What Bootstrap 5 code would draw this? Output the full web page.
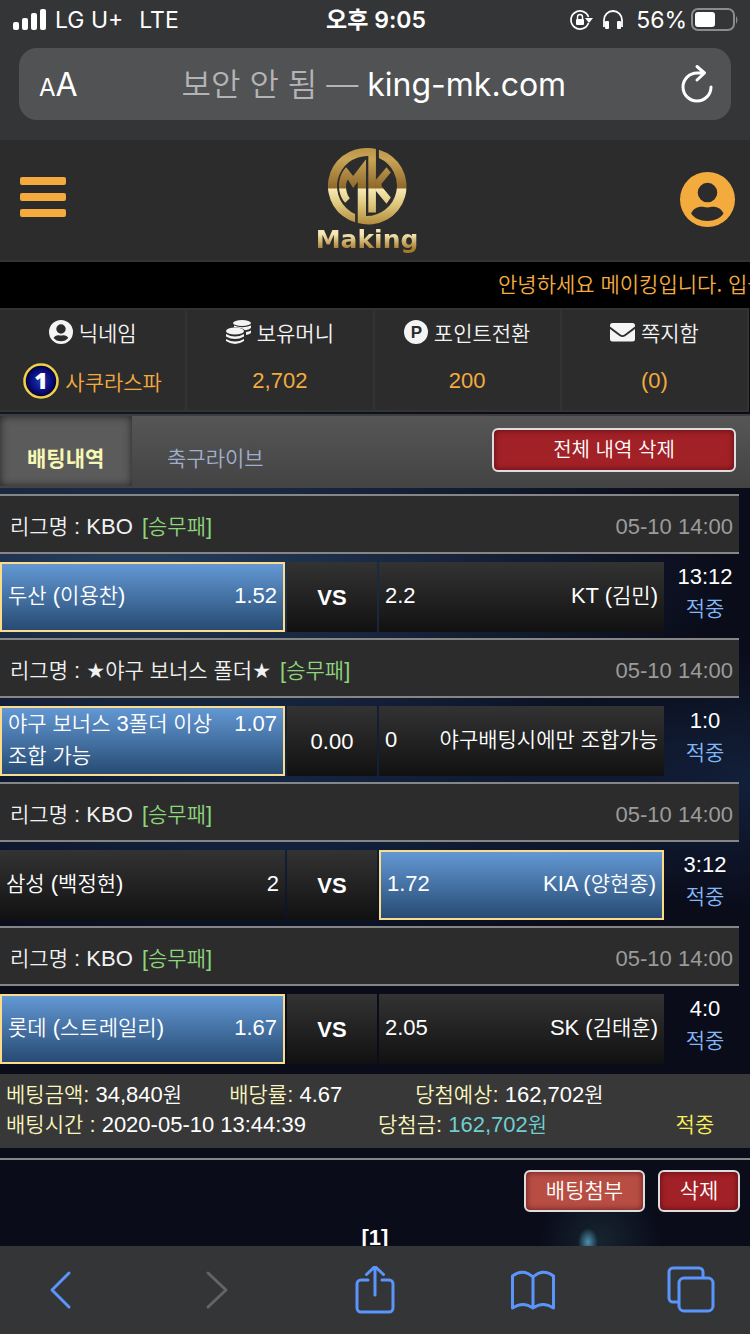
<!DOCTYPE html>
<html lang="ko">
<head>
<meta charset="utf-8">
<meta name="viewport" content="width=device-width, initial-scale=1">
<title>Making - 배팅내역</title>
<link href="https://cdn.jsdelivr.net/npm/bootstrap@5.3.0/dist/css/bootstrap.min.css" rel="stylesheet">
<style>
  body { font-family: "Liberation Sans", "Noto Sans CJK KR", sans-serif; font-size: 22px; line-height: 32px; color: #fff; background: #343537; }
  a { color: inherit; text-decoration: none; }
  button { color: inherit; }
  svg { display: block; flex: none; }
  .ko { font-family: "Noto Sans CJK KR", sans-serif; font-size: 21px; font-weight: 350; }
  span.ko { line-height: 20px; }
  .star { font-family: "DejaVu Sans", sans-serif; font-size: 21px; line-height: 20px; }

  /* browser chrome */
  .chrome { background: #343537; font-family: Inter, "Noto Sans CJK KR", sans-serif; }
  .status { height: 40px; padding: 0 11px 0 13px; font-size: 23px; }
  .status > div { flex: 1 1 0; }
  .status .clock { flex: 0 0 auto; font-weight: 600; font-size: 23px; }
  .address { height: 72px; margin: 8px 19px 20px; padding: 0 17px 0 20px; border-radius: 18px; background: #515254; }
  .address button, .toolbar button, .icon-btn { background: none; border: 0; padding: 0; }
  .address .url { font-size: 32px; line-height: 44px; padding: 2px 10px 0 0; }
  .address .url span { color: #b4b4b6; font-weight: 350; }
  .aa { line-height: 36px; font-size: 32px; padding-top: 4px; }
  .aa small { font-size: 24px; }
  .address .aa { padding-top: 4px; }
  .toolbar { height: 88px; padding: 0 35px; color: #5b95fb; }
  .toolbar button:disabled { color: #636466; }

  /* site header */
  .site { background:
      radial-gradient(ellipse 10px 14px at 588px 1102px, #4d8fae, transparent),
      radial-gradient(ellipse 60px 60px at 600px 1100px, #16242f, transparent),
      radial-gradient(ellipse 600px 200px at 130px 430px, #263f60, transparent),
      radial-gradient(ellipse 300px 130px at 760px 640px, #12203a, transparent),
      radial-gradient(ellipse 500px 160px at 260px 660px, #14294a, transparent),
      #0a0c1a; }
  .masthead { height: 122px; padding: 0 15px 2px 20px; background: #2c2c2c; border-bottom: 2px solid #333; color: #f3ab3e; }
  .brand { padding: 4px 12px 0 0; width: 112px; }
  .brand-name { font: 700 25px/30px "DejaVu Sans", sans-serif;
      background: linear-gradient(#f7e9b4 30%, #a57c2c 80%); -webkit-background-clip: text; background-clip: text; color: transparent; }
  .notice { height: 46px; background: #000; color: #f3ab3e; padding-left: 66.4%; line-height: 46px; }
  .stats { border-top: 2px solid #333; border-bottom: 2px solid #333; margin-right: 1px; }
  .stats > a { flex: 1 1 0; height: 100px; background: #2c2c2c; border-right: 2px solid #333; padding-top: 5px; }
  .stats .head { gap: 6px; height: 34px; color: #f4f4f4; }
  .stats .gold { gap: 6px; color: #f3ab3e; height: 64px; }

  /* tab bar */
  .tabbar { margin-top: 2px; height: 74px; border-top: 2px solid #3e3e3e; background: linear-gradient(#565656, #434343); padding-right: 14px; }
  .tabbar .tab { height: 70px; padding: 11px 28px 0; color: #9fb0cc; margin-bottom: 2px; }
  .tabbar .tab.active { background: #5b5b5b; color: #f7f7b4; font-weight: 700; box-shadow: inset 0 0 8px #222; width: 132px; padding-left: 27px; padding-right: 0; margin-right: 7px; }
  .site-btn { border: 2px solid #ddd; border-radius: 6px; background: #a22126; box-shadow: inset 0 0 6px rgba(60,0,20,.7); padding: 0 0 4px; line-height: 34px; color: #fff; }
  .site-btn.wide { width: 244px; height: 44px; font-size: 20px; padding-bottom: 2px; }
  .site-btn.attach { width: 121px; height: 42px; background: #b84e43; margin-right: 13px; }
  .site-btn.del { width: 82px; height: 42px; }

  /* bet slips */
  .league { margin: 6px 11px 8px 0; height: 60px; padding: 6px 6px 0 10px; background: #2c2c2c; border: solid #868686; border-width: 2px 0; color: #f2f2f2; }
  .league .kind { color: #8dd47c; margin-left: 3px; }
  .league time { color: #9b9b9b; }
  .game { display: grid; grid-template-columns: 285fr 90fr 285fr 78fr; gap: 2px; padding-right: 6px; height: 70px; }
  .pick { background: linear-gradient(#333, #111); padding: 0 6px 2px; }
  .pick > div { width: 100%; }
  .pick.on { background: linear-gradient(#6398d4, #274b73); border: 2px solid #fbdc8b; }
  .versus { background: linear-gradient(#333, #111); padding-top: 2px; }
  .result { margin-top: -1px; line-height: 31px; }
  .hit { color: #82b7f6; }
  .summary { margin-top: 10px; height: 74px; padding: 6px 0 0 6px; background: #383838; line-height: 30px; }
  .summary dl { display: grid; margin: 0; white-space: nowrap; }
  .summary dt, .summary dd { display: inline; margin: 0; font-weight: 400; line-height: 30px; }
  .summary dt { color: #faf6bc; }
  .summary .paid { color: #6fcfd0; }
  .summary .won { color: #f8ee5a; }
  .sum-a { grid-template-columns: 30% 25% 1fr; }
  .sum-b { grid-template-columns: 50% 40% 1fr; }
  .rule { margin-top: 10px; border-top: 2px solid #868686; padding: 10px; }
</style>
</head>
<body>
<div class="vh-100 d-flex flex-column overflow-hidden">

  <header class="chrome flex-shrink-0">
    <div class="status d-flex align-items-center">
      <div class="d-flex align-items-center gap-2">
        <svg width="34" height="22" viewBox="0 0 34 22" fill="#fff"><rect y="13" width="6" height="8" rx="2"/><rect x="9" y="9" width="6" height="12" rx="2"/><rect x="18" y="4" width="6" height="17" rx="2"/><rect x="27" width="6" height="21" rx="2"/></svg>
        <span>LG U+</span><span class="ms-2">LTE</span>
      </div>
      <div class="clock">오후 9:05</div>
      <div class="d-flex align-items-center justify-content-end">
        <svg class="me-2" width="26" height="22" viewBox="0 0 26 22"><path d="M20.500 14A9 9 0 1 1 20.500 8" fill="none" stroke="#fff" stroke-width="1.700"/><path d="M17 9h8l-4 5z" fill="#fff"/><rect x="8" y="10" width="8" height="6" rx="1" fill="#fff"/><path d="M9.500 10V8a2.500 2.500 0 0 1 5 0v2" fill="none" stroke="#fff" stroke-width="1.400"/></svg>
        <svg class="me-2" width="22" height="20" viewBox="0 0 22 20"><path d="M2 17v-7a9 9 0 0 1 18 0v7" fill="none" stroke="#fff" stroke-width="1.800"/><rect x="3" y="11" width="4" height="8" rx="1" fill="#fff"/><rect x="15" y="11" width="4" height="8" rx="1" fill="#fff"/></svg>
        <span class="ms-1 me-1">56%</span>
        <svg width="48" height="24" viewBox="0 0 48 24"><rect x="1" y="1" width="42" height="21" rx="6" fill="none" stroke="#8b8c8d" stroke-width="2"/><rect x="4" y="4" width="20" height="15" rx="3" fill="#fff"/><path d="M45 8q3 3.500 0 8z" fill="#8b8c8d"/></svg>
      </div>
    </div>
    <div class="address d-flex align-items-center justify-content-between">
      <button class="aa" type="button" aria-label="읽기 설정"><small>A</small>A</button>
      <button class="url" type="button"><span>보안 안 됨 —</span> king-mk.com</button>
      <button type="button" aria-label="새로고침"><svg width="34" height="40" viewBox="0 0 34 40" fill="none" stroke="#fff" stroke-width="3" stroke-linecap="round" stroke-linejoin="round"><path d="M31 23A14 14 0 1 1 17 9h7M17 2.500l7.500 6.500-7.500 7"/></svg></button>
    </div>
  </header>

  <main class="site flex-grow-1 overflow-hidden">
    <div class="masthead d-flex align-items-center justify-content-between">
      <button class="icon-btn mb-1" type="button" aria-label="메뉴"><svg width="46" height="41" viewBox="0 0 46 41" fill="#f3ab3e"><rect width="46" height="8" rx="2"/><rect y="16" width="46" height="8" rx="2"/><rect y="32" width="46" height="8" rx="2"/></svg></button>
      <a href="#" class="brand d-flex flex-column align-items-center">
        <svg width="80" height="78" viewBox="6 5 240 236">
          <defs><linearGradient id="gold" gradientUnits="userSpaceOnUse" x1="0" y1="7" x2="0" y2="239"><stop offset="0" stop-color="#bb9347"/><stop offset=".15" stop-color="#c9a557"/><stop offset=".53" stop-color="#8f682a"/><stop offset=".535" stop-color="#f6eab5"/><stop offset=".75" stop-color="#dcc578"/><stop offset="1" stop-color="#b08c3d"/></linearGradient></defs>
          <g fill="url(#gold)">
            <path d="M153 11V203H130V32A92 92 0 0 0 90 208V233A115 115 0 0 1 130 8Q142 8 153 11z"/>
            <path d="M162 13A115 115 0 0 1 98 235V110L84 129L68 103C60 115 60 142 74 160L60 174C32 142 37 92 63 66L84 93L123 42V214A92 92 0 0 0 162 38z"/>
            <path d="M153 104L185 66L198 82L170 116V124L198 158L185 177L153 138z"/>
          </g>
        </svg>
        <span class="brand-name">Making</span>
      </a>
      <a href="#" aria-label="내 정보"><svg width="55" height="55" viewBox="90 65 163 163"><path fill="#f3ab3e" fill-rule="evenodd" d="M171.500 65a81.500 81.500 0 1 1 0 163a81.500 81.500 0 1 1 0-163zM171.500 97a29 29 0 1 0 0 58a29 29 0 1 0 0-58zM123 188c10 14 26 22 48 22s38-8 48-22c-5-12-17-20-31-20-7 0-8 2-17 2s-10-2-17-2c-14 0-26 8-31 20z"/></svg></a>
    </div>

    <div class="notice overflow-hidden text-nowrap"><span class="ko">안녕하세요 메이킹입니다. 입금</span></div>

    <nav class="stats d-flex text-center">
      <a href="#">
        <div class="d-flex head justify-content-center align-items-center"><svg width="24" height="24" viewBox="90 65 163 163"><path fill="#f4f4f4" fill-rule="evenodd" d="M171.500 65a81.500 81.500 0 1 1 0 163a81.500 81.500 0 1 1 0-163zM171.500 94a32 32 0 1 0 0 64a32 32 0 1 0 0-64zM121 188c12 14 28 22 50 22s38-8 50-22c-5-12-18-20-33-20-7 0-8 2-17 2s-10-2-17-2c-15 0-28 8-33 20z"/></svg><span class="ko">닉네임</span></div>
        <div class="gold d-flex justify-content-center align-items-center">
          <svg width="36" height="36" viewBox="0 0 36 36"><defs><radialGradient id="coin"><stop offset="0" stop-color="#1c3f9e"/><stop offset=".6" stop-color="#0a0e86"/><stop offset="1" stop-color="#000026"/></radialGradient></defs><circle cx="18" cy="18" r="16.500" fill="url(#coin)" stroke="#f0cf4a" stroke-width="2.500"/><text x="18" y="26" text-anchor="middle" font-family="Open Sans" font-weight="800" font-size="23" fill="#fff">1</text></svg>
          <span class="ko">사쿠라스파</span></div>
      </a>
      <a href="#">
        <div class="d-flex head justify-content-center align-items-center"><svg width="25" height="24" viewBox="0 0 25 24" fill="#f4f4f4"><ellipse cx="16" cy="3" rx="9" ry="3"/><path d="M8 5.500q8 3.500 17 0V8q-2 2-6 2.300-3-3-11-3zM20 12q3-.4 5-1.500V13q-2 1.500-5 2z"/><ellipse cx="9" cy="11" rx="9" ry="3.600"/><path d="M0 14q9 5 18 0v2.500q-9 5-18 0zM0 19q9 5 18 0v2q-9 6-18 0z"/></svg><span class="ko">보유머니</span></div>
        <div class="gold d-flex justify-content-center align-items-center">2,702</div>
      </a>
      <a href="#">
        <div class="d-flex head justify-content-center align-items-center"><svg width="24" height="24" viewBox="0 0 24 24"><circle cx="12" cy="12" r="12" fill="#f4f4f4"/><text x="12.500" y="18" text-anchor="middle" font-family="Liberation Sans" font-weight="700" font-size="17" fill="#2c2c2c">P</text></svg><span class="ko">포인트전환</span></div>
        <div class="gold d-flex justify-content-center align-items-center">200</div>
      </a>
      <a href="#">
        <div class="d-flex head justify-content-center align-items-center"><svg width="25" height="19" viewBox="0 0 25 19" fill="#f4f4f4"><path d="M2.500 0h20A2.500 2.500 0 0 1 25 2.500V3.500L14.500 11.500q-2 1.500-4 0L0 3.500V2.500A2.500 2.500 0 0 1 2.500 0z"/><path d="M0 6l9.500 7q3 2.200 6 0L25 6v10a2.500 2.500 0 0 1-2.500 2.500h-20A2.500 2.500 0 0 1 0 16z"/></svg><span class="ko">쪽지함</span></div>
        <div class="gold d-flex justify-content-center align-items-center">(0)</div>
      </a>
    </nav>

    <div class="tabbar d-flex align-items-center justify-content-between">
      <nav class="d-flex">
        <a href="#" class="tab active ko d-flex align-items-center">배팅내역</a>
        <a href="#" class="tab ko d-flex align-items-center">축구라이브</a>
      </nav>
      <button class="site-btn wide ko mb-1" type="button">전체 내역 삭제</button>
    </div>

    <section>
      <div class="league d-flex align-items-center justify-content-between">
        <div><span class="ko">리그명</span> : KBO <span class="kind">[<span class="ko">승무패</span>]</span></div><time>05-10 14:00</time>
      </div>
      <div class="game">
        <div class="pick on d-flex align-items-center"><div class="d-flex justify-content-between"><span><span class="ko">두산</span> (<span class="ko">이용찬</span>)</span><span>1.52</span></div></div>
        <div class="versus d-flex align-items-center justify-content-center fw-bold">VS</div>
        <div class="pick d-flex align-items-center"><div class="d-flex justify-content-between"><span>2.2</span><span>KT (<span class="ko">김민</span>)</span></div></div>
        <div class="result text-center">13:12<div class="hit ko">적중</div></div>
      </div>

      <div class="league d-flex align-items-center justify-content-between">
        <div><span class="ko">리그명</span> : <span class="star">★</span><span class="ko">야구 보너스 폴더</span><span class="star">★</span> <span class="kind">[<span class="ko">승무패</span>]</span></div><time>05-10 14:00</time>
      </div>
      <div class="game">
        <div class="pick on d-flex align-items-center"><div class="d-flex justify-content-between"><span><span class="ko">야구 보너스</span> 3<span class="ko">폴더 이상<br>조합 가능</span></span><span>1.07</span></div></div>
        <div class="versus d-flex align-items-center justify-content-center">0.00</div>
        <div class="pick d-flex align-items-center"><div class="d-flex justify-content-between"><span>0</span><span><span class="ko">야구배팅시에만 조합가능</span></span></div></div>
        <div class="result text-center">1:0<div class="hit ko">적중</div></div>
      </div>

      <div class="league d-flex align-items-center justify-content-between">
        <div><span class="ko">리그명</span> : KBO <span class="kind">[<span class="ko">승무패</span>]</span></div><time>05-10 14:00</time>
      </div>
      <div class="game">
        <div class="pick d-flex align-items-center"><div class="d-flex justify-content-between"><span><span class="ko">삼성</span> (<span class="ko">백정현</span>)</span><span>2</span></div></div>
        <div class="versus d-flex align-items-center justify-content-center fw-bold">VS</div>
        <div class="pick on d-flex align-items-center"><div class="d-flex justify-content-between"><span>1.72</span><span>KIA (<span class="ko">양현종</span>)</span></div></div>
        <div class="result text-center">3:12<div class="hit ko">적중</div></div>
      </div>

      <div class="league d-flex align-items-center justify-content-between">
        <div><span class="ko">리그명</span> : KBO <span class="kind">[<span class="ko">승무패</span>]</span></div><time>05-10 14:00</time>
      </div>
      <div class="game">
        <div class="pick on d-flex align-items-center"><div class="d-flex justify-content-between"><span><span class="ko">롯데</span> (<span class="ko">스트레일리</span>)</span><span>1.67</span></div></div>
        <div class="versus d-flex align-items-center justify-content-center fw-bold">VS</div>
        <div class="pick d-flex align-items-center"><div class="d-flex justify-content-between"><span>2.05</span><span>SK (<span class="ko">김태훈</span>)</span></div></div>
        <div class="result text-center">4:0<div class="hit ko">적중</div></div>
      </div>

      <div class="summary">
        <dl class="sum-a">
          <div><dt><span class="ko">베팅금액</span>:</dt> <dd>34,840<span class="ko">원</span></dd></div>
          <div><dt><span class="ko">배당률</span>:</dt> <dd>4.67</dd></div>
          <div><dt><span class="ko">당첨예상</span>:</dt> <dd>162,702<span class="ko">원</span></dd></div>
        </dl>
        <dl class="sum-b">
          <div><dt><span class="ko">배팅시간</span> :</dt> <dd>2020-05-10 13:44:39</dd></div>
          <div><dt><span class="ko">당첨금</span>:</dt> <dd class="paid">162,702<span class="ko">원</span></dd></div>
          <div class="won"><span class="ko">적중</span></div>
        </dl>
      </div>

      <div class="rule d-flex justify-content-end">
        <button class="site-btn attach ko" type="button">배팅첨부</button>
        <button class="site-btn del ko" type="button">삭제</button>
      </div>
      <div class="text-center fw-bold"><a href="#">[1]</a></div>
    </section>
  </main>

  <nav class="chrome toolbar flex-shrink-0 d-flex align-items-center justify-content-between">
    <button type="button" aria-label="뒤로"><svg width="48" height="48" viewBox="0 0 48 48" fill="none" stroke="currentColor" stroke-width="3" stroke-linecap="round" stroke-linejoin="round"><path d="M34 7L17 24l17 17"/></svg></button>
    <button type="button" aria-label="앞으로" disabled><svg width="48" height="48" viewBox="0 0 48 48" fill="none" stroke="currentColor" stroke-width="3" stroke-linecap="round" stroke-linejoin="round"><path d="M15 7l18 17-18 17"/></svg></button>
    <button type="button" aria-label="공유"><svg width="48" height="48" viewBox="0 0 48 48" fill="none" stroke="currentColor" stroke-width="3" stroke-linecap="round" stroke-linejoin="round"><path d="M17 14h-7a4 4 0 0 0-4 4v24a4 4 0 0 0 4 4h28a4 4 0 0 0 4-4V18a4 4 0 0 0-4-4h-7M24 29V1M15.500 8.500L24 0.500l8.500 8"/></svg></button>
    <button type="button" aria-label="책갈피"><svg width="48" height="48" viewBox="0 0 48 48" fill="none" stroke="currentColor" stroke-width="3" stroke-linejoin="round"><path d="M24 11Q14 2 3.500 10v32Q14 35 24 42q10-7 20.500 0V10Q34 2 24 11v31"/></svg></button>
    <button type="button" aria-label="탭"><svg width="48" height="48" viewBox="0 0 48 48" fill="none" stroke="currentColor" stroke-width="3"><rect x="12" y="12" width="34" height="33" rx="5"/><path d="M12 36H6a4 4 0 0 1-4-4V6a4 4 0 0 1 4-4h26a4 4 0 0 1 4 4v6"/></svg></button>
  </nav>
</div>
<script src="https://cdn.jsdelivr.net/npm/bootstrap@5.3.0/dist/js/bootstrap.bundle.min.js"></script>
</body>
</html>
